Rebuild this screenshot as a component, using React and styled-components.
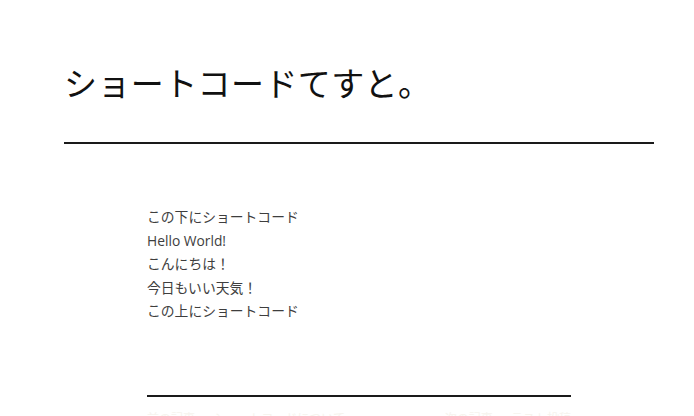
import React from 'react';
import styled, { createGlobalStyle } from 'styled-components';

const GlobalStyle = createGlobalStyle`
  html, body {
    margin: 0;
    padding: 0;
    background: #fff;
  }
  body {
    font-family: "Open Sans", "Noto Sans CJK JP", sans-serif;
    color: #333;
  }
`;

const Page = styled.div`
  width: 590px;
  margin-left: 64px;
  padding-top: 56px;
`;

const Header = styled.header`
  border-bottom: 2px solid #1a1a1a;
  padding-bottom: 34px;
`;

const Title = styled.h1`
  margin: 0;
  font-family: "Noto Sans CJK JP", sans-serif;
  font-weight: 400;
  font-size: 33px;
  line-height: 52px;
  color: #111;
  letter-spacing: 0.4px;
`;

const Entry = styled.article`
  width: 424px;
  margin: 0 auto;
  padding-top: 61px;
`;

const Body = styled.div`
  font-size: 13.8px;
  line-height: 23.5px;
  color: #3e3e3e;
  padding-bottom: 72px;
  border-bottom: 2px solid #1a1a1a;
`;

const Line = styled.p`
  margin: 0;
`;

const Nav = styled.nav`
  display: flex;
  justify-content: space-between;
  padding-top: 12px;
  font-size: 12px;
  line-height: 20px;
  color: #f6f4ee;
`;

const NavLink = styled.span`
  white-space: nowrap;
`;

const lines = [
  'この下にショートコード',
  'Hello World!',
  'こんにちは！',
  '今日もいい天気！',
  'この上にショートコード',
];

export default function App() {
  return (
    <>
      <GlobalStyle />
      <Page>
        <Header>
          <Title>ショートコードてすと。</Title>
        </Header>
        <Entry>
          <Body>
            {lines.map((t) => (
              <Line key={t}>{t}</Line>
            ))}
          </Body>
          <Nav>
            <NavLink>前の記事 — ショートコードについて</NavLink>
            <NavLink>次の記事 — テスト投稿</NavLink>
          </Nav>
        </Entry>
      </Page>
    </>
  );
}
